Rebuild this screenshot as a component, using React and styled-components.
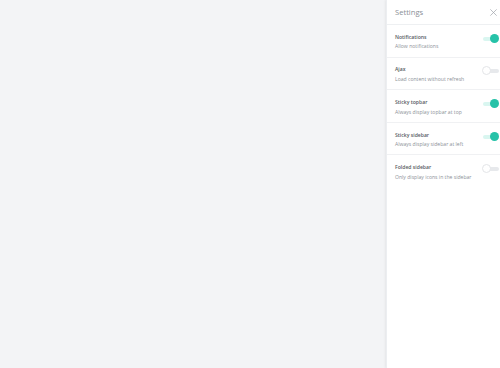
import styled, { createGlobalStyle } from "styled-components"

const Global = createGlobalStyle`
    html, body {
        margin:0;
        padding:0;
        background:#f3f4f6;
        font-family:"Open Sans", "Liberation Sans", sans-serif;
    }
`

const Page = styled.div`
    display:flex;
    justify-content:flex-end;
    height:368px;
    background:#f3f4f6;
`

const Panel = styled.aside`
    width:114px;
    height:100%;
    background:#fff;
    box-shadow:-1px 0 2px rgba(0,0,0,0.06);
    border-left:1px solid #eceef1;
    box-sizing:border-box;
`

const Header = styled.div`
    display:flex;
    align-items:center;
    justify-content:space-between;
    height:25px;
    padding:0 2px 0 8px;
    border-bottom:1px solid #eef0f2;
    box-sizing:border-box;
`

const Title = styled.span`
    font-size:7.6px;
    color:#8a8f96;
`

const Close = styled.svg`
    width:9px;
    height:9px;
`

const Row = styled.div`
    display:flex;
    align-items:center;
    justify-content:space-between;
    height:32.6px;
    padding:0 1px 0 8px;
    border-bottom:1px solid ${props => props.last ? "transparent" : "#f0f1f3"};
    box-sizing:border-box;
`

const TextWrapper = styled.div`
    display:flex;
    flex-direction:column;
    gap:3.6px;
    margin-top:1.5px;
`

const Name = styled.span`
    font-size:5.1px;
    font-weight:600;
    color:#555a62;
`

const Hint = styled.span`
    font-size:5.1px;
    color:#8c9198;
`

const Switch = styled.div`
    position:relative;
    width:17px;
    height:10px;
    margin-top:-4px;
    &::before {
        content:"";
        position:absolute;
        left:1px;
        right:0;
        top:3px;
        height:4px;
        border-radius:2px;
        background:${props => props.on ? "#d9f6f0" : "#e7e9ec"};
    }
    &::after {
        content:"";
        position:absolute;
        top:0;
        left:${props => props.on ? "8px" : "0"};
        width:9px;
        height:9px;
        border-radius:50%;
        box-sizing:border-box;
        background:${props => props.on ? "#26c2a8" : "#fff"};
        border:${props => props.on ? "none" : "1px solid #e3e5e8"};
    }
`

const settings = [
    { name: "Notifications", hint: "Allow notifications", on: true },
    { name: "Ajax", hint: "Load content without refresh", on: false },
    { name: "Sticky topbar", hint: "Always display topbar at top", on: true },
    { name: "Sticky sidebar", hint: "Always display sidebar at left", on: true },
    { name: "Folded sidebar", hint: "Only display icons in the sidebar", on: false },
]

const App = () => {
    return (
        <>
            <Global />
            <Page>
                <Panel>
                    <Header>
                        <Title>Settings</Title>
                        <Close viewBox="0 0 10 10">
                            <path d="M1.5 1.5L8.5 8.5M8.5 1.5L1.5 8.5" stroke="#a0a5ab" strokeWidth="0.8" fill="none" />
                        </Close>
                    </Header>
                    {settings.map((s, i) => (
                        <Row key={s.name} last={i === settings.length - 1}>
                            <TextWrapper>
                                <Name>{s.name}</Name>
                                <Hint>{s.hint}</Hint>
                            </TextWrapper>
                            <Switch on={s.on} />
                        </Row>
                    ))}
                </Panel>
            </Page>
        </>
    )
}

export default App
